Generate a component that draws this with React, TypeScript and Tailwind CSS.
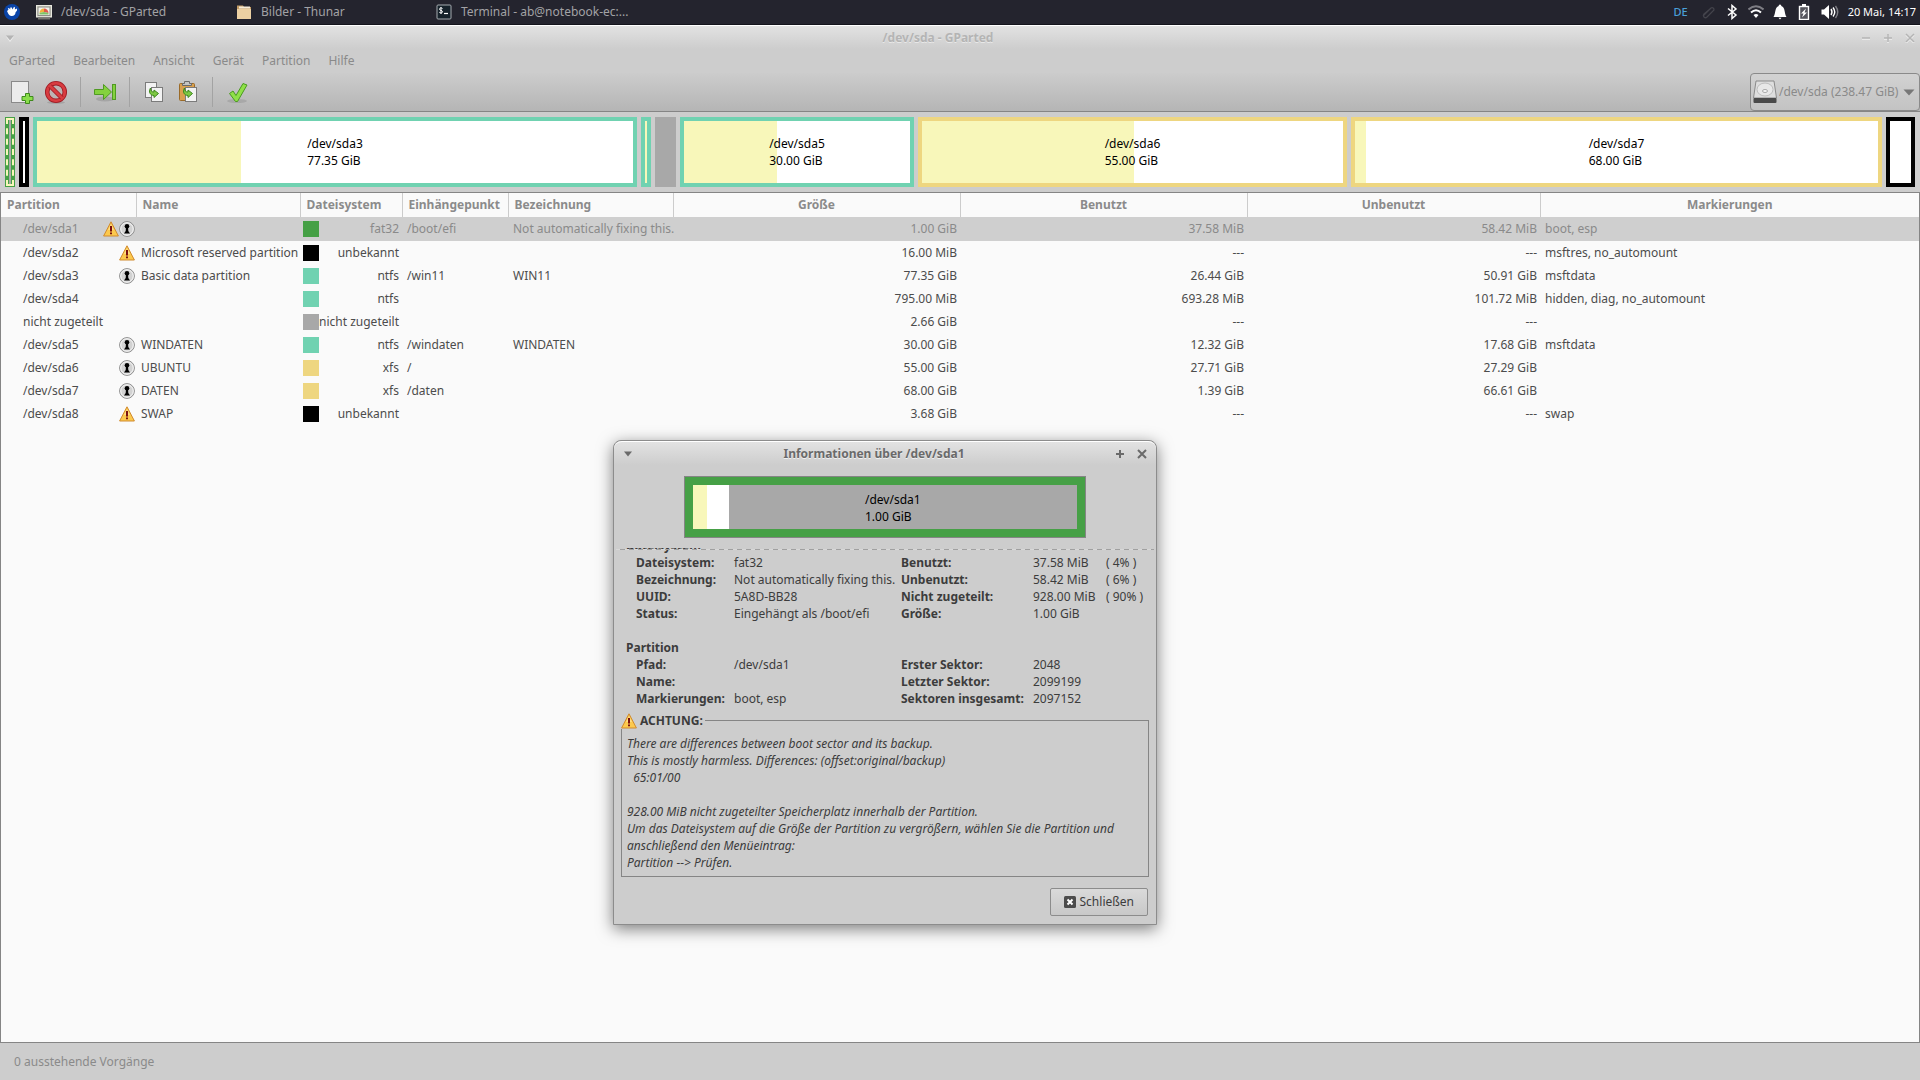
import { type ReactNode } from "react";

type Segment = {
  name?: string;
  size?: string;
  weight: number;
  frame: string;
  used: number;
  free?: boolean;
};

type Partition = {
  path: string;
  warn?: boolean;
  locked?: boolean;
  name?: string;
  color: string;
  fs: string;
  mount?: string;
  label?: string;
  size: string;
  used: string;
  unused: string;
  flags?: string;
};

const SEGMENTS: Segment[] = [
  { weight: 10, frame: "border-black", used: 0 },
  { name: "/dev/sda3", size: "77.35 GiB", weight: 604, frame: "border-[#70d2b1]", used: 34.3 },
  { weight: 10, frame: "border-[#70d2b1]", used: 100 },
  { weight: 21, frame: "border-[#a8a8a8]", used: 0, free: true },
  { name: "/dev/sda5", size: "30.00 GiB", weight: 234, frame: "border-[#70d2b1]", used: 41 },
  { name: "/dev/sda6", size: "55.00 GiB", weight: 429, frame: "border-[#eed680]", used: 50.3 },
  { name: "/dev/sda7", size: "68.00 GiB", weight: 531, frame: "border-[#eed680]", used: 2.1 },
  { weight: 29, frame: "border-black", used: 0 },
];

const PARTITIONS: Partition[] = [
  { path: "/dev/sda1", warn: true, locked: true, color: "bg-[#46a046]", fs: "fat32", mount: "/boot/efi", label: "Not automatically fixing this.", size: "1.00 GiB", used: "37.58 MiB", unused: "58.42 MiB", flags: "boot, esp" },
  { path: "/dev/sda2", warn: true, name: "Microsoft reserved partition", color: "bg-black", fs: "unbekannt", size: "16.00 MiB", used: "---", unused: "---", flags: "msftres, no_automount" },
  { path: "/dev/sda3", locked: true, name: "Basic data partition", color: "bg-[#70d2b1]", fs: "ntfs", mount: "/win11", label: "WIN11", size: "77.35 GiB", used: "26.44 GiB", unused: "50.91 GiB", flags: "msftdata" },
  { path: "/dev/sda4", color: "bg-[#70d2b1]", fs: "ntfs", size: "795.00 MiB", used: "693.28 MiB", unused: "101.72 MiB", flags: "hidden, diag, no_automount" },
  { path: "nicht zugeteilt", color: "bg-[#a8a8a8]", fs: "nicht zugeteilt", size: "2.66 GiB", used: "---", unused: "---" },
  { path: "/dev/sda5", locked: true, name: "WINDATEN", color: "bg-[#70d2b1]", fs: "ntfs", mount: "/windaten", label: "WINDATEN", size: "30.00 GiB", used: "12.32 GiB", unused: "17.68 GiB", flags: "msftdata" },
  { path: "/dev/sda6", locked: true, name: "UBUNTU", color: "bg-[#eed680]", fs: "xfs", mount: "/", size: "55.00 GiB", used: "27.71 GiB", unused: "27.29 GiB" },
  { path: "/dev/sda7", locked: true, name: "DATEN", color: "bg-[#eed680]", fs: "xfs", mount: "/daten", size: "68.00 GiB", used: "1.39 GiB", unused: "66.61 GiB" },
  { path: "/dev/sda8", warn: true, name: "SWAP", color: "bg-black", fs: "unbekannt", size: "3.68 GiB", used: "---", unused: "---", flags: "swap" },
];

const MENU = ["GParted", "Bearbeiten", "Ansicht", "Gerät", "Partition", "Hilfe"];

function WarningIcon() {
  return (
    <svg className="size-4 shrink-0" viewBox="0 0 16 16">
      <path d="M8 0.800 L15.400 15 H0.600 Z" fill="#fcc94d" stroke="#d08a2e" strokeWidth="1" strokeLinejoin="round" />
      <path d="M8 3 L11 9 H5 Z" fill="#ffe7a0" opacity="0.7" />
      <path d="M7 5 H9 V10.500 H7 Z M7 11.500 H9 V13.200 H7 Z" fill="#7a1010" />
    </svg>
  );
}

function LockIcon() {
  return (
    <svg className="size-4 shrink-0" viewBox="0 0 16 16">
      <circle cx="8" cy="8" r="7.400" fill="#e4e4e4" stroke="#8c8c8c" />
      <circle cx="8" cy="8" r="6.200" fill="#d2d2d2" stroke="#f4f4f4" />
      <circle cx="8" cy="5.200" r="2.300" fill="#000" />
      <path d="M7 6 H9 L9.300 10 L11 12.500 H5 L6.700 10 Z" fill="#000" />
    </svg>
  );
}

function TaskButton({ icon, children }: { icon: ReactNode; children: ReactNode }) {
  return (
    <button className="flex w-50 items-center gap-[9px] text-left text-[#a2a2a5]">
      {icon}
      <span>{children}</span>
    </button>
  );
}

function Panel() {
  return (
    <header className="flex h-[25px] items-center border-b border-[#14141c] bg-[#24242e] text-xs">
      <button aria-label="Whisker Menu" className="ml-1 mr-4">
        <svg className="size-4" viewBox="0 0 16 16">
          <circle cx="8" cy="8" r="8" fill="#0a44a8" />
          <path d="M3 7 L4.500 5.800 L3.800 4.500 L5 4 L6.200 5.500 L6.300 3.500 L7.800 3.500 L8.500 5.500 L10 2.800 L11 3.500 L10.800 5.500 L13 4.500 L13 6.500 L11.500 8.500 C11.500 11 9.500 12.500 7 12 C4.500 11.500 4 9 3 7Z" fill="#fff" />
        </svg>
      </button>
      <TaskButton
        icon={
          <svg className="size-4" viewBox="0 0 16 16">
            <rect x="0.500" y="1.500" width="15" height="11.500" fill="#d0d0c6" stroke="#e9e9e0" />
            <rect x="2" y="3" width="12" height="8.500" fill="#f2f2ee" stroke="#8c8c84" />
            <path d="M3.500 9 A4.500 4.500 0 0 1 8 4.500 V8 Z" fill="#f0b23c" />
            <path d="M8 4.500 A4.500 4.500 0 0 1 12.500 9 L8 8 Z" fill="#e2574c" />
            <path d="M3.500 9 L8 8 L12.500 9 V10.500 H3.500 Z" fill="#7dc466" />
            <rect x="2" y="13.500" width="12" height="2" fill="#75756e" />
          </svg>
        }
      >
        /dev/sda - GParted
      </TaskButton>
      <TaskButton
        icon={
          <svg className="size-4" viewBox="0 0 16 16">
            <path d="M1 1.500 H7 L8 3 H15 V15 H1 Z" fill="#c39c66" />
            <path d="M1 5 H15 V15 H1 Z" fill="#ecd0a2" />
            <path d="M3 2.500 H14 V4.500 H3 Z" fill="#f7ecd8" />
          </svg>
        }
      >
        Bilder - Thunar
      </TaskButton>
      <TaskButton
        icon={
          <svg className="size-4" viewBox="0 0 16 16">
            <rect x="1" y="1" width="14" height="14" rx="1" fill="#16222b" stroke="#a5abb0" />
            <path d="M6.500 4.500 C5 3.500 3.500 4 3.500 5.200 C3.500 6.800 6.500 6 6.500 7.800 C6.500 9 4.500 9.300 3.300 8.300 M5 3 V10" fill="none" stroke="#fff" />
            <path d="M8 9.500 H12" stroke="#fff" strokeWidth="1.200" />
          </svg>
        }
      >
        Terminal - ab@notebook-ec:...
      </TaskButton>
      <div className="ml-auto flex items-center gap-2 pr-1 text-white">
        <span className="mr-1 text-[11px] font-medium text-[#4a9fd8]">DE</span>
        <svg className="size-4" viewBox="0 0 16 16" fill="none" stroke="#44444c" strokeWidth="1.200">
          <path d="M3 12 L11 4 A2 2 0 0 1 14 6 L7 13 A2 2 0 0 1 4 10 L10 5" />
        </svg>
        <svg className="size-4" viewBox="0 0 16 16" fill="none" stroke="currentColor" strokeWidth="1.500">
          <path d="M4 4.500 L12 11 L8 14.500 V1.500 L12 5 L4 11.500" />
        </svg>
        <svg className="size-4" viewBox="0 0 16 16" fill="none" stroke="currentColor" strokeWidth="2">
          <path d="M0.500 5.500 Q8 -1 15.500 5.500" stroke="#7d7d84" />
          <path d="M3 8.500 Q8 4 13 8.500" />
          <path d="M5.500 11 Q8 9 10.500 11 L8 14 Z" fill="currentColor" stroke="none" />
        </svg>
        <svg className="size-4" viewBox="0 0 16 16" fill="currentColor">
          <path d="M8 0.500 C9 0.500 9.300 1.600 9.300 2 C13.500 3.200 12 9 14.500 13 H1.500 C4 9 2.500 3.200 6.700 2 C6.700 1.600 7 0.500 8 0.500 Z M6.500 13.800 H9.500 L8 15.500 Z" />
        </svg>
        <svg className="size-4" viewBox="0 0 16 16" fill="none" stroke="currentColor">
          <rect x="3.500" y="2.500" width="9" height="13" fill="#55555d" strokeWidth="1.400" />
          <path d="M6 1 H10" strokeWidth="2" />
          <path d="M10 4.500 L5 9.500 H7.500 L6 13.500 L11 8.500 H8.500 Z" fill="#fff" stroke="none" />
        </svg>
        <svg className="h-4 w-5" viewBox="0 0 20 16" fill="none" stroke="currentColor" strokeWidth="1.400">
          <path d="M1.500 5.500 H4 L9 1 V15 L4 10.500 H1.500 Z" fill="currentColor" stroke="none" />
          <path d="M11 5 Q13 8 11 11" />
          <path d="M13 3.500 Q16.500 8 13 12.500" />
          <path d="M15.500 2 Q20 8 15.500 14" stroke="#7d7d84" />
        </svg>
        <span className="text-[11px]">20 Mai, 14:17</span>
      </div>
    </header>
  );
}

function ToolButton({ label, children }: { label: string; children: ReactNode }) {
  return (
    <button aria-label={label} className="flex size-[34px] items-center justify-center">
      <svg className="size-6" viewBox="0 0 24 24">
        {children}
      </svg>
    </button>
  );
}

function ToolSeparator() {
  return <div className="mx-[7px] h-[30px] w-px bg-[#a3a3a3]" />;
}

function Toolbar() {
  return (
    <div className="flex h-[39px] items-center border-b border-[#858585] bg-linear-to-b from-[#cccccc] to-[#b5b5b5] pl-[5px]">
      <ToolButton label="Neu">
        <rect x="1.500" y="1.500" width="17" height="21" fill="#ececec" stroke="#8a8a8a" />
        <path d="M15.500 13.500 h4 v3 h3.500 v4 h-3.500 v3 h-4 v-3 h-3.500 v-4 h3.500 Z" fill="#8ade4b" stroke="#3e8a1c" />
      </ToolButton>
      <ToolButton label="Löschen">
        <ellipse cx="12" cy="22.500" rx="9" ry="1.500" fill="#000" opacity="0.12" />
        <circle cx="12" cy="12" r="8.800" fill="#bdb4b4" stroke="#a01c24" strokeWidth="4.500" />
        <circle cx="12" cy="12" r="8.800" fill="none" stroke="#d83c40" strokeWidth="2.800" />
        <path d="M6 6 L18 18" stroke="#a01c24" strokeWidth="4.500" />
        <path d="M5.500 5.500 L18.500 18.500" stroke="#d83c40" strokeWidth="2.800" />
      </ToolButton>
      <ToolSeparator />
      <ToolButton label="Größe ändern">
        <ellipse cx="12" cy="19" rx="9" ry="2.500" fill="#000" opacity="0.12" />
        <path d="M1.500 9.500 h9 v-5 l8 7.500 l-8 7.500 v-5 h-9 Z" fill="#84d13e" stroke="#4f9a22" />
        <rect x="19.500" y="4.500" width="3" height="15" fill="#84d13e" stroke="#4f9a22" />
      </ToolButton>
      <ToolSeparator />
      <ToolButton label="Kopieren">
        <rect x="3.500" y="2.500" width="11" height="15" fill="#f2f2f2" stroke="#7b7b7b" />
        <rect x="9.500" y="7.500" width="11" height="14" fill="#f2f2f2" stroke="#7b7b7b" />
        <path d="M8.500 8 C6 12 8.500 15.500 12 15.500 V17.500 L16.500 13.500 L12 10 V12 C10 12 8.500 11 8.500 8 Z" fill="#7ec843" stroke="#3c8a1c" />
      </ToolButton>
      <ToolButton label="Einfügen">
        <rect x="3.500" y="3.500" width="15" height="17" rx="1" fill="#d9a04e" stroke="#9a6a28" />
        <path d="M6.500 5.500 V3.500 H8.500 V1.500 H13.500 V3.500 H15.500 V5.500 Z" fill="#c4c4c4" stroke="#6a6a6a" />
        <rect x="9.500" y="7.500" width="11" height="14" fill="#f2f2f2" stroke="#7b7b7b" />
        <path d="M8.500 8 C6 12 8.500 15.500 12 15.500 V17.500 L16.500 13.500 L12 10 V12 C10 12 8.500 11 8.500 8 Z" fill="#7ec843" stroke="#3c8a1c" />
      </ToolButton>
      <ToolSeparator />
      <ToolButton label="Anwenden">
        <ellipse cx="12" cy="21" rx="10" ry="2" fill="#000" opacity="0.1" />
        <path d="M4.500 13.500 L8 11 L11 15.500 L18 3.500 L22 5 L12.500 21.500 H10.500 Z" fill="#8fe048" stroke="#4a9a20" />
      </ToolButton>
      <label className="relative ml-auto flex h-[38px] items-center gap-0.5 rounded-sm border border-[#8a8a8a] bg-linear-to-b from-[#d2d2d2] to-[#c3c3c3] pl-0.5 text-xs text-[#8a8a8a]">
        <svg className="size-6" viewBox="0 0 24 24">
          <path d="M3 1 H21 L23.500 18 H0.500 Z" fill="#dedede" stroke="#8a8a8a" />
          <ellipse cx="12" cy="9.500" rx="8" ry="6.500" fill="#e8e8e8" stroke="#bdbdbd" />
          <ellipse cx="12" cy="11" rx="2.500" ry="1.500" fill="#f8f8f8" stroke="#a8a8a8" />
          <rect x="0.500" y="18" width="23" height="5" rx="1" fill="#4a4a4a" />
        </svg>
        <select aria-label="Gerät" className="h-full appearance-none bg-transparent pr-5">
          <option>/dev/sda (238.47 GiB)</option>
        </select>
        <svg className="pointer-events-none absolute right-1 size-3" viewBox="0 0 12 12">
          <path d="M0.500 3.500 H11.500 L6 9.500 Z" fill="#777" />
        </svg>
      </label>
    </div>
  );
}

function DiskMap() {
  return (
    <div className="flex h-[80px] gap-1 bg-[#cdcdcd] p-[5px]">
      <div className="w-[10px] shrink-0 bg-[#46a046] p-px">
        <div className="flex h-full justify-center border-2 border-dashed border-[#f8f7ba]">
          <div className="w-[2px] bg-[#a8a8a8]" />
        </div>
      </div>
      {SEGMENTS.map((s, i) => (
        <div
          key={i}
          className={`relative overflow-hidden border-4 ${s.frame} ${s.free ? "bg-[#a8a8a8]" : "bg-white"}`}
          style={{ flex: `${s.weight} 1 ${s.weight}px` }}
        >
          <div className="h-full bg-[#f8f7ba]" style={{ width: `${s.used}%` }} />
          {s.name && (
            <div className="absolute inset-0 flex items-center justify-center text-xs leading-[17px] text-black">
              <div>
                {s.name}
                <br />
                {s.size}
              </div>
            </div>
          )}
        </div>
      ))}
    </div>
  );
}

function PartitionTable() {
  return (
    <table className="w-full table-fixed border-collapse text-xs whitespace-nowrap">
      <colgroup>
        <col className="w-[135px]" />
        <col className="w-[164px]" />
        <col className="w-[102px]" />
        <col className="w-[106px]" />
        <col className="w-[165px]" />
        <col className="w-[287px]" />
        <col className="w-[287px]" />
        <col className="w-[293px]" />
        <col />
      </colgroup>
      <thead>
        <tr className="h-6 text-[#8b8b8b]">
          {["Partition", "Name", "Dateisystem", "Einhängepunkt", "Bezeichnung"].map((h) => (
            <th key={h} className="border-r border-[#cccccc] px-1.5 text-left font-bold">
              {h}
            </th>
          ))}
          {["Größe", "Benutzt", "Unbenutzt", "Markierungen"].map((h) => (
            <th key={h} className="border-r border-[#cccccc] text-center font-bold last:border-r-0">
              {h}
            </th>
          ))}
        </tr>
      </thead>
      <tbody>
        {PARTITIONS.map((p, i) => (
          <tr key={p.path} className={i === 0 ? "h-6 bg-[#cfcfcf] text-[#8a8a8a]" : "h-[23px] text-[#4c4c4c]"}>
            <td className="pr-px pl-[22px]">
              <div className="flex items-center justify-between">
                {p.path}
                <span className="flex">
                  {p.warn && <WarningIcon />}
                  {p.locked && <LockIcon />}
                </span>
              </div>
            </td>
            <td className="pl-[5px]">{p.name}</td>
            <td className="px-[3px]">
              <div className="flex items-center justify-between">
                <span className={`size-4 ${p.color}`} />
                {p.fs}
              </div>
            </td>
            <td className="pl-[5px]">{p.mount}</td>
            <td className="pl-[5px]">{p.label}</td>
            <td className="pr-[3px] text-right">{p.size}</td>
            <td className="pr-[3px] text-right">{p.used}</td>
            <td className="pr-[3px] text-right">{p.unused}</td>
            <td className="pl-[5px]">{p.flags}</td>
          </tr>
        ))}
      </tbody>
    </table>
  );
}

function InfoDialog() {
  return (
    <section
      role="dialog"
      aria-labelledby="info-title"
      className="absolute top-[440px] left-[613px] flex w-[544px] flex-col rounded-t-lg border border-[#8c8c8c] bg-[#cdcdcd] text-xs text-[#3c3c3c] shadow-[0_4px_16px_rgba(0,0,0,0.5)]"
    >
      <div className="flex h-6 items-center rounded-t-lg border-t border-white bg-linear-to-b from-[#e2e2e2] to-[#cdcdcd] px-[9px] text-[#6a6a6a]">
        <button aria-label="Fenstermenü">
          <svg className="size-2.5" viewBox="0 0 10 10">
            <path d="M1 2.500 H9 L5 7.500 Z" fill="#6a6a6a" />
          </svg>
        </button>
        <h2 id="info-title" className="flex-1 text-center font-bold [text-shadow:0_1px_0_#f0f0f0]">
          Informationen über /dev/sda1
        </h2>
        <div className="flex gap-3">
          <button aria-label="Maximieren">
            <svg className="size-2.5" viewBox="0 0 10 10">
              <path d="M5 1 V9 M1 5 H9" stroke="#6a6a6a" strokeWidth="2" />
            </svg>
          </button>
          <button aria-label="Schließen">
            <svg className="size-2.5" viewBox="0 0 10 10">
              <path d="M1 1 L9 9 M9 1 L1 9" stroke="#6a6a6a" strokeWidth="2" />
            </svg>
          </button>
        </div>
      </div>

      <div className="mx-auto mt-[11px] h-[62px] w-[402px] border border-[#858585]">
        <div className="flex h-full border-8 border-[#46a046] bg-[#a8a8a8]">
          <div className="w-[14px] bg-[#f8f7ba]" />
          <div className="w-[22px] bg-white" />
          <div className="flex flex-1 items-center pt-0.5 pl-[136px] leading-[17px] text-black">
            <div>
              /dev/sda1
              <br />
              1.00 GiB
            </div>
          </div>
        </div>
      </div>

      {/* scrolled area, the first heading is cut by the overshoot line */}
      <div className="relative mx-0.5 mt-[10px] h-[164px] overflow-hidden leading-[17px]">
        <div className="absolute inset-x-0 top-px h-px bg-[repeating-linear-gradient(90deg,#d8d8d8_0_4px,#a0a0a0_4px_9px)]" />
        <div className="-mt-[11px] px-2.5">
          <h3 className="font-bold">Dateisystem</h3>
          <div className="grid grid-cols-[98px_167px_132px_73px_1fr] pl-2.5">
            <b>Dateisystem:</b><span>fat32</span><b>Benutzt:</b><span>37.58 MiB</span><span>( 4% )</span>
            <b>Bezeichnung:</b><span>Not automatically fixing this.</span><b>Unbenutzt:</b><span>58.42 MiB</span><span>( 6% )</span>
            <b>UUID:</b><span>5A8D-BB28</span><b>Nicht zugeteilt:</b><span>928.00 MiB</span><span>( 90% )</span>
            <b>Status:</b><span>Eingehängt als /boot/efi</span><b>Größe:</b><span>1.00 GiB</span><span />
          </div>
          <h3 className="mt-[17px] font-bold">Partition</h3>
          <div className="grid grid-cols-[98px_167px_132px_1fr] pl-2.5">
            <b>Pfad:</b><span>/dev/sda1</span><b>Erster Sektor:</b><span>2048</span>
            <b>Name:</b><span /><b>Letzter Sektor:</b><span>2099199</span>
            <b>Markierungen:</b><span>boot, esp</span><b>Sektoren insgesamt:</b><span>2097152</span>
          </div>
        </div>
      </div>

      <fieldset className="mx-[7px] border border-[#858585] px-[5px] pt-1.5 pb-[5px] leading-[17px] italic">
        <legend className="-ml-1.5 flex items-center gap-[3px] pr-0.5 font-bold not-italic">
          <WarningIcon />
          ACHTUNG:
        </legend>
        <p className="whitespace-pre-wrap">
          {"There are differences between boot sector and its backup.\nThis is mostly harmless. Differences: (offset:original/backup)\n  65:01/00\n\n928.00 MiB nicht zugeteilter Speicherplatz innerhalb der Partition.\nUm das Dateisystem auf die Größe der Partition zu vergrößern, wählen Sie die Partition und anschließend den Menüeintrag:\nPartition --> Prüfen."}
        </p>
      </fieldset>

      <div className="flex justify-end px-2 pt-[11px] pb-2">
        <button className="flex h-7 items-center gap-1 rounded-xs border border-[#8c8c8c] bg-linear-to-b from-[#dadada] to-[#c8c8c8] px-[13px]">
          <svg className="size-3" viewBox="0 0 12 12">
            <rect width="12" height="12" rx="1.500" fill="#4c4c4c" />
            <path d="M3.500 3.500 L8.500 8.500 M8.500 3.500 L3.500 8.500" stroke="#fff" strokeWidth="2" />
          </svg>
          Schließen
        </button>
      </div>
    </section>
  );
}

export default function App() {
  return (
    <div className="relative flex min-h-screen flex-col bg-[#cdcdcd] font-['Noto_Sans',sans-serif]">
      <Panel />
      <div className="flex h-6 items-center border-t border-white bg-linear-to-b from-[#e2e2e2] to-[#cdcdcd] px-[5px] text-xs text-[#b4b4b4]">
        <button aria-label="Fenstermenü">
          <svg className="size-2.5" viewBox="0 0 10 10">
            <path d="M1 3.500 H9 L5 9 Z" fill="#f0f0f0" />
            <path d="M1 2.500 H9 L5 7.500 Z" fill="#b4b4b4" />
          </svg>
        </button>
        <h1 className="flex-1 text-center font-bold [text-shadow:0_1px_0_#e8e8e8]">/dev/sda - GParted</h1>
        <div className="flex gap-3">
          {["M1 5 H9", "M5 1 V9 M1 5 H9", "M1 1 L9 9 M9 1 L1 9"].map((d, i) => (
            <button key={d} aria-label={["Minimieren", "Maximieren", "Schließen"][i]}>
              <svg className="size-2.5" viewBox="0 0 10 10">
                <path d={d} stroke="#f0f0f0" strokeWidth="1.500" transform="translate(0 1)" />
                <path d={d} stroke="#b4b4b4" strokeWidth="1.500" />
              </svg>
            </button>
          ))}
        </div>
      </div>
      <nav className="flex h-6 items-center gap-[18px] px-[9px] text-xs text-[#8a8a8a]">
        {MENU.map((m) => (
          <button key={m}>{m}</button>
        ))}
      </nav>
      <Toolbar />
      <DiskMap />
      <main className="flex-1 border border-[#858585] bg-[#fafafa]">
        <PartitionTable />
      </main>
      <footer className="flex h-[37px] items-center px-3.5 text-xs text-[#8a8a8a]">0 ausstehende Vorgänge</footer>
      <InfoDialog />
    </div>
  );
}
